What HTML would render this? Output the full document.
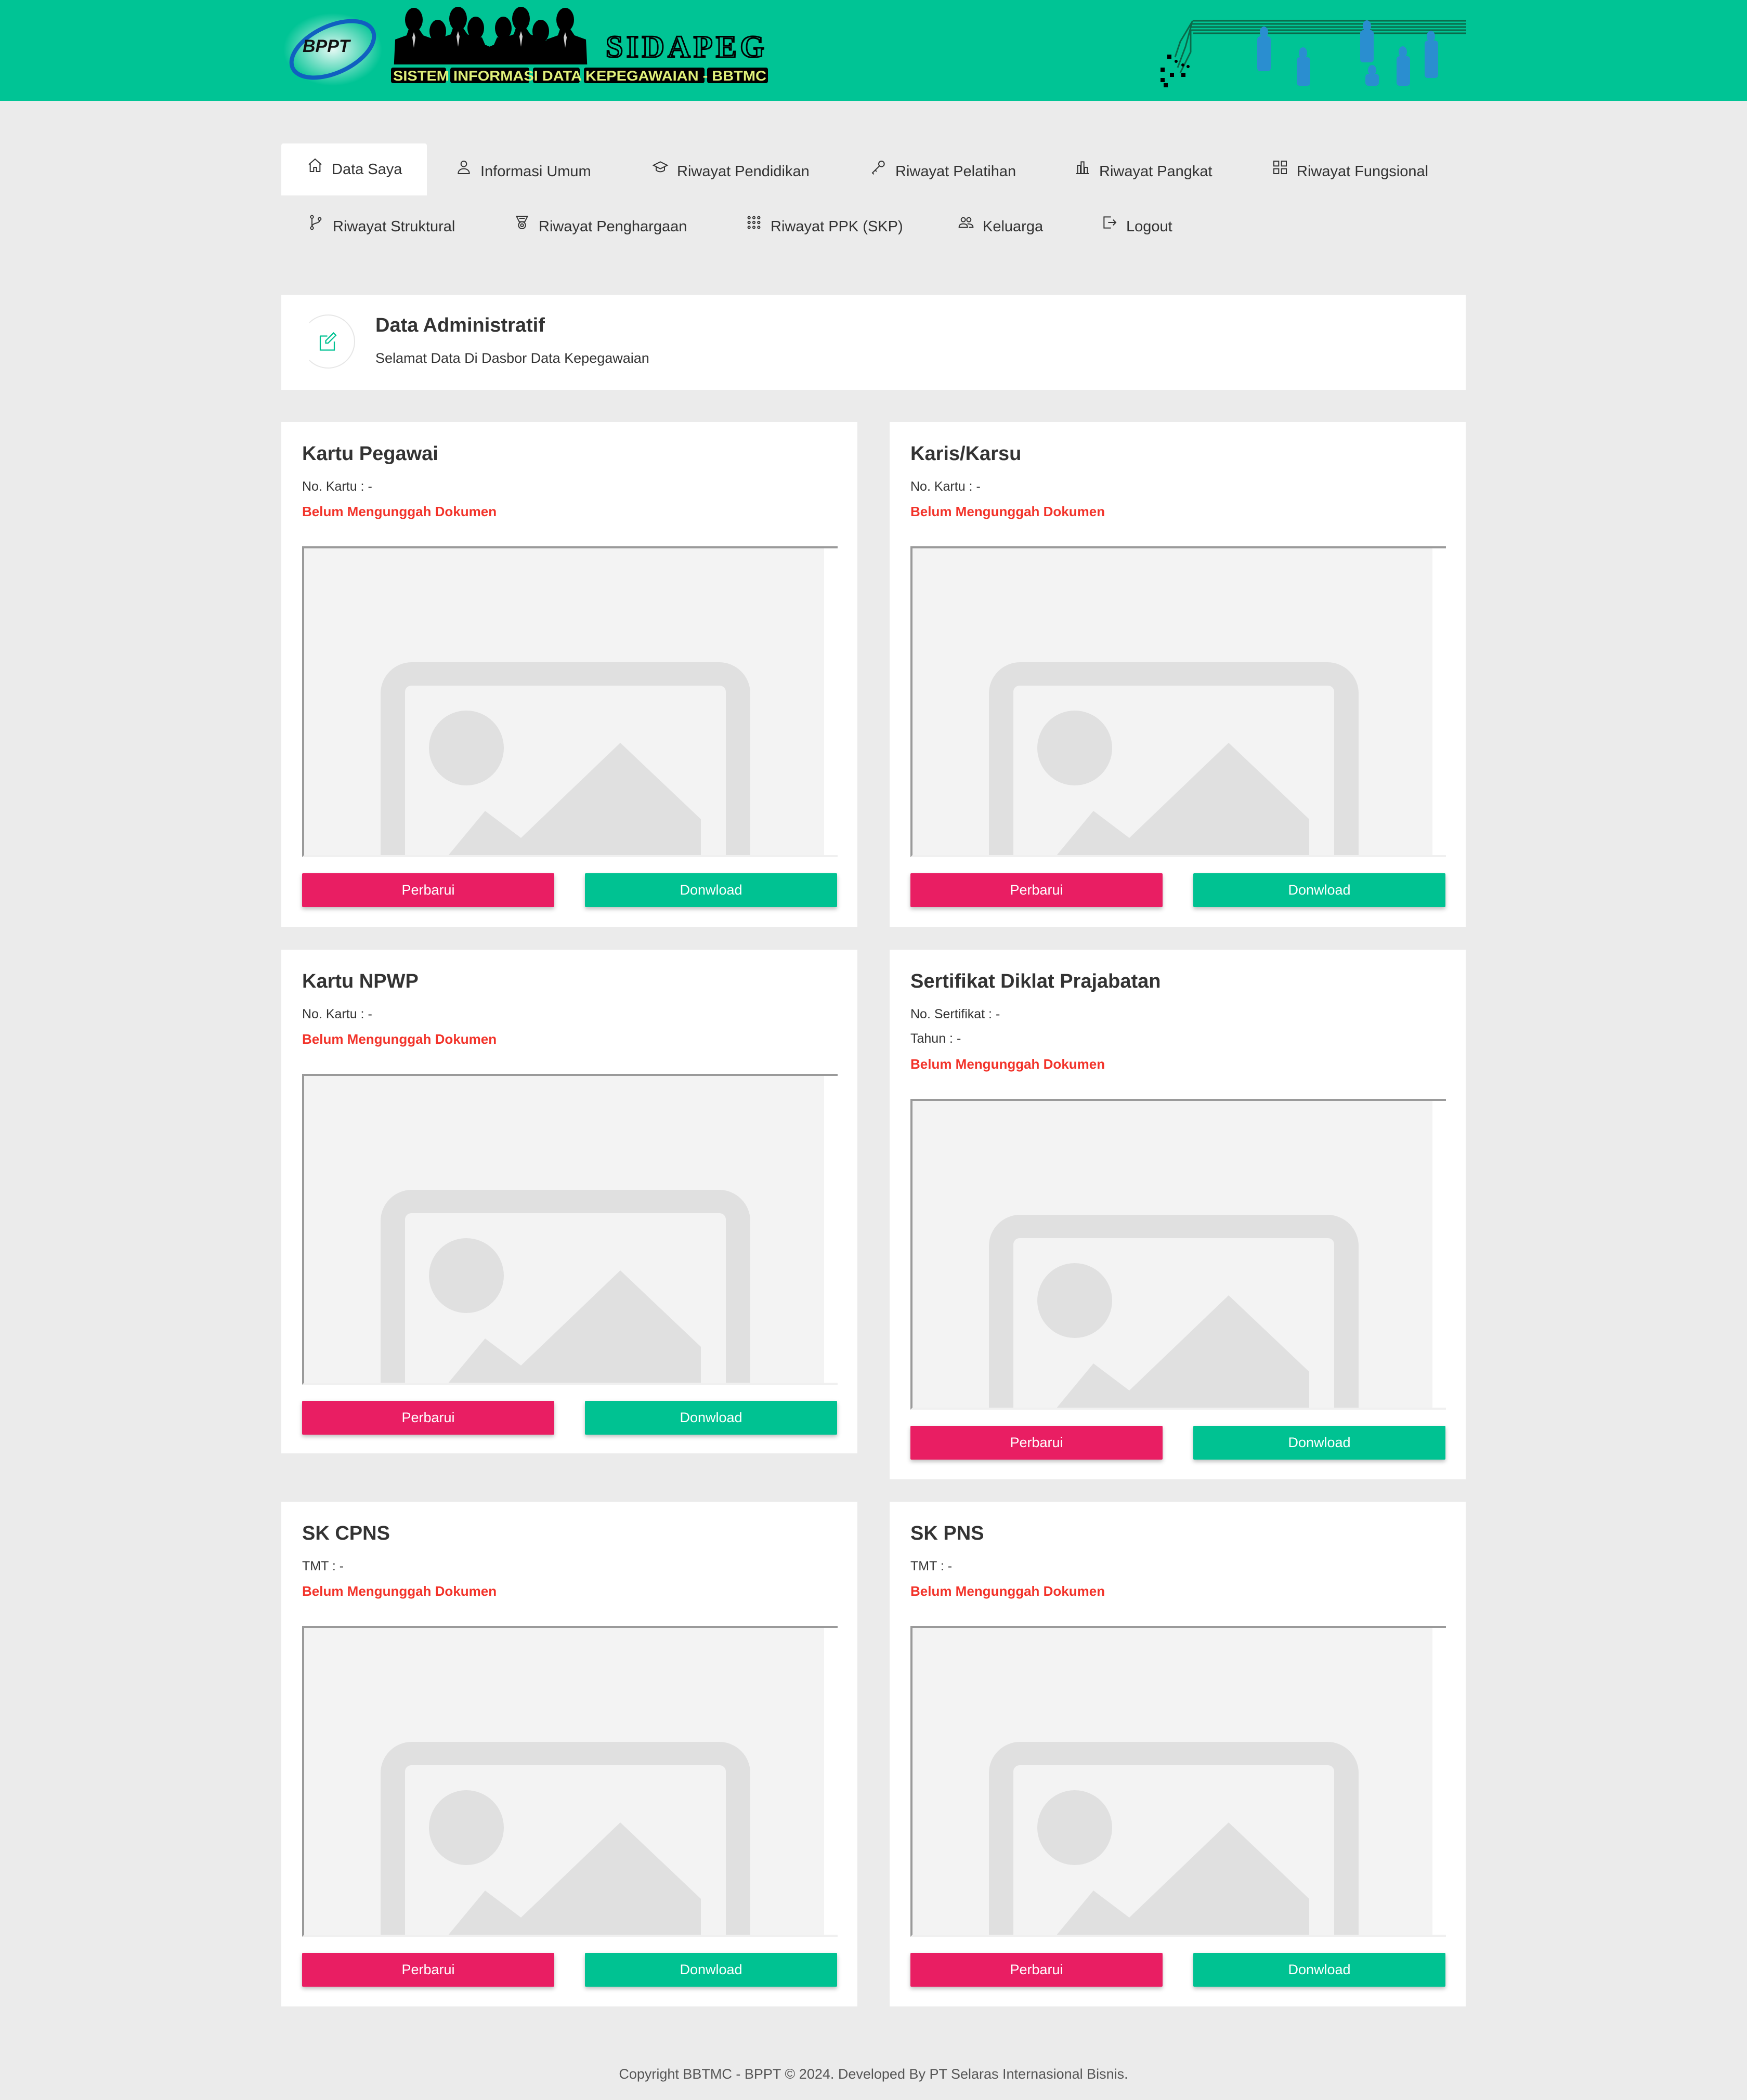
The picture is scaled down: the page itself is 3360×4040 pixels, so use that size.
<!DOCTYPE html>
<html><head><meta charset="utf-8">
<style>
*{box-sizing:border-box;margin:0;padding:0}
body{width:3360px;height:4040px;background:#ebebeb;font-family:"Liberation Sans",Arial,sans-serif;color:#333;position:relative;overflow:hidden}
.hdr{position:absolute;left:0;top:0;width:3360px;height:194px;background:#00c495}
.nav{position:absolute;font-size:29px;color:#333;display:flex;align-items:flex-start}
.nav svg{margin-right:16px;margin-top:-8px}
.tab{position:absolute;left:541px;top:276px;width:280px;height:100px;background:#fff;border-radius:4px 4px 0 0}
.admin{position:absolute;left:541px;top:567px;width:2278px;height:183px;background:#fff}
.card{position:absolute;background:#fff}
.card h3{position:absolute;left:40px;top:40px;font-size:38px;font-weight:bold;color:#333}
.card .l{position:absolute;left:40px;font-size:25px;color:#333}
.card .r{position:absolute;left:40px;font-size:26px;color:#f2332a;font-weight:bold}
.img{position:absolute;left:40px;width:1030px;height:598px;background:#f3f3f3;border-top:4px solid #9a9a9a;border-left:4px solid #9a9a9a;border-bottom:4px solid #f0f0f0;overflow:hidden}
.img .sb{position:absolute;right:0;top:0;width:26px;height:100%;background:#fff}
.btn{position:absolute;width:485px;height:65px;color:#fff;font-size:27px;text-align:center;line-height:65px;border-radius:2px;box-shadow:0 4px 8px rgba(0,0,0,.25)}
.p{background:#e91e63;left:40px}.d{background:#00c292;left:584px}
.foot{position:absolute;top:3975px;left:0;width:3360px;text-align:center;font-size:27px;color:#555}
</style></head><body>
<div class="hdr">
<svg width="3360" height="194" style="position:absolute;left:0;top:0">
 <defs><radialGradient id="g1"><stop offset="0" stop-color="#fff" stop-opacity=".9"/><stop offset="1" stop-color="#fff" stop-opacity="0"/></radialGradient>
 <clipPath id="cp"><rect x="740" y="0" width="400" height="124"/></clipPath>
 <g id="m"><ellipse cx="0" cy="0" rx="17" ry="23"/><path d="M-10 18h20l8 12 22 8 4 84h-84l4-84 22-8z"/></g>
 <g id="w"><ellipse cx="0" cy="0" rx="16" ry="22"/><path d="M-12 18h24l6 14 18 8 2 82h-76l2-82 18-8z"/></g></defs>
 <ellipse cx="640" cy="95" rx="95" ry="70" fill="url(#g1)"/>
 <ellipse cx="640" cy="95" rx="85" ry="45" fill="none" stroke="#1060c0" stroke-width="8" transform="rotate(-25 640 95)"/>
 <text x="582" y="100" font-size="34" font-weight="bold" font-style="italic" fill="#111" font-family="Liberation Sans">BPPT</text>
 <g fill="#000" clip-path="url(#cp)">
  <use href="#w" x="842" y="60"/><use href="#w" x="915" y="54"/><use href="#m" x="796" y="38"/><use href="#m" x="881" y="36"/>
  <use href="#w" x="968" y="54"/><use href="#w" x="1040" y="60"/><use href="#m" x="1002" y="36"/><use href="#m" x="1087" y="38"/>
 </g>
 <g fill="#fff" opacity=".8"><path d="M796 62l-3 10 3 20 3-20z"/><path d="M881 60l-3 10 3 20 3-20z"/><path d="M1002 60l-3 10 3 20 3-20z"/><path d="M1087 62l-3 10 3 20 3-20z"/></g>
 <g fill="#000"><rect x="752" y="130" width="106" height="30" rx="4"/><rect x="866" y="130" width="152" height="30" rx="4"/><rect x="1025" y="130" width="90" height="30" rx="4"/><rect x="1123" y="130" width="232" height="30" rx="4"/><rect x="1360" y="130" width="117" height="30" rx="4"/></g>
 <text x="1165" y="110" font-size="60" font-family="Liberation Serif" font-weight="bold" fill="#00c495" stroke="#000" stroke-width="3" textLength="305">SIDAPEG</text>
 <text x="756" y="155" font-size="27" font-family="Liberation Sans" font-weight="bold" fill="#e0f07a" textLength="718" lengthAdjust="spacingAndGlyphs">SISTEM INFORMASI DATA KEPEGAWAIAN - BBTMC</text>
 <g stroke="#0a6a4a" stroke-width="3" fill="none">
  <path d="M2294 40H2820M2292 46H2820M2290 52H2820M2290 58H2820M2295 64H2820"/>
  <path d="M2294 40L2270 80L2260 110M2292 46L2280 90L2265 130M2290 58L2290 100L2270 140"/>
 </g>
 <g fill="#000"><rect x="2245" y="105" width="8" height="8"/><rect x="2232" y="130" width="8" height="8"/><rect x="2250" y="140" width="8" height="8"/><rect x="2232" y="150" width="8" height="8"/><rect x="2272" y="140" width="8" height="8"/><rect x="2238" y="160" width="8" height="8"/><circle cx="2262" cy="118" r="3"/><circle cx="2275" cy="125" r="3"/><circle cx="2285" cy="128" r="3"/></g>
 <g fill="#2a8ed0">
  <ellipse cx="2431" cy="62" rx="8" ry="11"/><rect x="2418" y="70" width="26" height="67" rx="6"/>
  <ellipse cx="2506" cy="102" rx="8" ry="11"/><rect x="2494" y="110" width="26" height="55" rx="6"/>
  <ellipse cx="2629" cy="50" rx="8" ry="11"/><rect x="2616" y="58" width="26" height="62" rx="6"/>
  <ellipse cx="2639" cy="135" rx="8" ry="10"/><rect x="2626" y="142" width="26" height="23" rx="6"/>
  <ellipse cx="2698" cy="100" rx="8" ry="11"/><rect x="2686" y="108" width="26" height="57" rx="6"/>
  <ellipse cx="2752" cy="70" rx="8" ry="11"/><rect x="2740" y="78" width="26" height="72" rx="6"/>
 </g>
</svg>
</div>

<div class="tab"></div>
<div class="nav" style="left:590px;top:310px"><svg width="32" height="32" viewBox="0 0 24 24" fill="none" stroke="#333" stroke-width="1.5"><path d="M3 11L12 3l9 8M5 10v11h5v-6h4v6h5V10"/></svg>Data Saya</div>
<div class="nav" style="left:876px;top:314px"><svg width="32" height="32" viewBox="0 0 24 24" fill="none" stroke="#333" stroke-width="1.5"><circle cx="12" cy="7" r="4"/><path d="M4 21c0-5 4-7 8-7s8 2 8 7z"/></svg>Informasi Umum</div>
<div class="nav" style="left:1254px;top:314px"><svg width="32" height="32" viewBox="0 0 24 24" fill="none" stroke="#333" stroke-width="1.5"><path d="M2 9l10-5 10 5-10 5zM6 11v5c3 3 9 3 12 0v-5"/></svg>Riwayat Pendidikan</div>
<div class="nav" style="left:1674px;top:314px"><svg width="32" height="32" viewBox="0 0 24 24" fill="none" stroke="#333" stroke-width="1.5"><circle cx="16" cy="7" r="4"/><path d="M13 10L3 20l2 2M7 16l2 2"/></svg>Riwayat Pelatihan</div>
<div class="nav" style="left:2066px;top:314px"><svg width="32" height="32" viewBox="0 0 24 24" fill="none" stroke="#333" stroke-width="1.5"><path d="M3 21h18M5 21V9h4v12M10 21V4h4v17M15 21V12h4v9"/></svg>Riwayat Pangkat</div>
<div class="nav" style="left:2446px;top:314px"><svg width="32" height="32" viewBox="0 0 24 24" fill="none" stroke="#333" stroke-width="1.5"><rect x="3" y="3" width="7" height="7"/><rect x="14" y="3" width="7" height="7"/><rect x="3" y="14" width="7" height="7"/><rect x="14" y="14" width="7" height="7"/></svg>Riwayat Fungsional</div>
<div class="nav" style="left:592px;top:420px"><svg width="32" height="32" viewBox="0 0 24 24" fill="none" stroke="#333" stroke-width="1.5"><circle cx="6" cy="4" r="2"/><circle cx="6" cy="20" r="2"/><circle cx="17" cy="7" r="2"/><path d="M6 6v12M17 9c0 5-11 3-11 9"/></svg>Riwayat Struktural</div>
<div class="nav" style="left:988px;top:420px"><svg width="32" height="32" viewBox="0 0 24 24" fill="none" stroke="#333" stroke-width="1.5"><path d="M4 3h16l-4 8H8zM8 6h8"/><circle cx="12" cy="16" r="5"/><circle cx="12" cy="16" r="2"/></svg>Riwayat Penghargaan</div>
<div class="nav" style="left:1434px;top:420px"><svg width="32" height="32" viewBox="0 0 24 24" fill="none" stroke="#333" stroke-width="1.5"><circle cx="5" cy="5" r="1.6"/><circle cx="12" cy="5" r="1.6"/><circle cx="19" cy="5" r="1.6"/><circle cx="5" cy="12" r="1.6"/><circle cx="12" cy="12" r="1.6"/><circle cx="19" cy="12" r="1.6"/><circle cx="5" cy="19" r="1.6"/><circle cx="12" cy="19" r="1.6"/><circle cx="19" cy="19" r="1.6"/></svg>Riwayat PPK (SKP)</div>
<div class="nav" style="left:1842px;top:420px"><svg width="32" height="32" viewBox="0 0 24 24" fill="none" stroke="#333" stroke-width="1.5"><circle cx="8" cy="8" r="3"/><circle cx="16" cy="8" r="3"/><path d="M2 19c0-4 3-5 6-5s6 1 6 5zM14 14c4 0 8 1 8 5h-6"/></svg>Keluarga</div>
<div class="nav" style="left:2118px;top:420px"><svg width="32" height="32" viewBox="0 0 24 24" fill="none" stroke="#333" stroke-width="1.5"><path d="M14 4H4v16h10M10 12h11M17 8l4 4-4 4"/></svg>Logout</div>

<div class="admin">
 <div style="position:absolute;left:38px;top:38px;width:104px;height:104px;border-radius:50%;border:2px solid #e6e6e6;border-left-color:#fff"></div>
 <svg style="position:absolute;left:72px;top:70px" width="36" height="40" viewBox="0 0 24 26" fill="none" stroke="#00c292" stroke-width="1.5"><path d="M2 6h9M2 6v18h18V13"/><path d="M19 2l3 3-10 10H9v-3z"/></svg>
 <div style="position:absolute;left:181px;top:38px;font-size:38px;font-weight:bold;color:#333">Data Administratif</div>
 <div style="position:absolute;left:181px;top:107px;font-size:27px;color:#333">Selamat Data Di Dasbor Data Kepegawaian</div>
</div>

<div class="card" style="left:541px;top:812px;width:1108px;height:971px">
 <h3>Kartu Pegawai</h3><div class="l" style="top:110px">No. Kartu : -</div><div class="r" style="top:157px">Belum Mengunggah Dokumen</div>
 <div class="img" style="top:239px"><div class="sb"></div><svg width="1030" height="598" style="position:absolute;left:0;top:0"><rect x="147" y="219" width="711" height="500" rx="60" fill="#e0e0e0"/><rect x="194" y="264" width="617" height="450" rx="12" fill="#f3f3f3"/><circle cx="312" cy="384" r="72" fill="#e0e0e0"/><path d="M271 598L348 505L417 557L608 374L763 521V598Z" fill="#e0e0e0"/></svg></div>
 <div class="btn p" style="top:868px">Perbarui</div><div class="btn d" style="top:868px">Donwload</div>
</div>
<div class="card" style="left:1711px;top:812px;width:1108px;height:971px">
 <h3>Karis/Karsu</h3><div class="l" style="top:110px">No. Kartu : -</div><div class="r" style="top:157px">Belum Mengunggah Dokumen</div>
 <div class="img" style="top:239px"><div class="sb"></div><svg width="1030" height="598" style="position:absolute;left:0;top:0"><rect x="147" y="219" width="711" height="500" rx="60" fill="#e0e0e0"/><rect x="194" y="264" width="617" height="450" rx="12" fill="#f3f3f3"/><circle cx="312" cy="384" r="72" fill="#e0e0e0"/><path d="M271 598L348 505L417 557L608 374L763 521V598Z" fill="#e0e0e0"/></svg></div>
 <div class="btn p" style="top:868px">Perbarui</div><div class="btn d" style="top:868px">Donwload</div>
</div>
<div class="card" style="left:541px;top:1827px;width:1108px;height:969px">
 <h3>Kartu NPWP</h3><div class="l" style="top:110px">No. Kartu : -</div><div class="r" style="top:157px">Belum Mengunggah Dokumen</div>
 <div class="img" style="top:239px"><div class="sb"></div><svg width="1030" height="598" style="position:absolute;left:0;top:0"><rect x="147" y="219" width="711" height="500" rx="60" fill="#e0e0e0"/><rect x="194" y="264" width="617" height="450" rx="12" fill="#f3f3f3"/><circle cx="312" cy="384" r="72" fill="#e0e0e0"/><path d="M271 598L348 505L417 557L608 374L763 521V598Z" fill="#e0e0e0"/></svg></div>
 <div class="btn p" style="top:868px">Perbarui</div><div class="btn d" style="top:868px">Donwload</div>
</div>
<div class="card" style="left:1711px;top:1827px;width:1108px;height:1019px">
 <h3>Sertifikat Diklat Prajabatan</h3><div class="l" style="top:110px">No. Sertifikat : -</div><div class="l" style="top:157px">Tahun : -</div><div class="r" style="top:205px">Belum Mengunggah Dokumen</div>
 <div class="img" style="top:287px"><div class="sb"></div><svg width="1030" height="598" style="position:absolute;left:0;top:0"><rect x="147" y="219" width="711" height="500" rx="60" fill="#e0e0e0"/><rect x="194" y="264" width="617" height="450" rx="12" fill="#f3f3f3"/><circle cx="312" cy="384" r="72" fill="#e0e0e0"/><path d="M271 598L348 505L417 557L608 374L763 521V598Z" fill="#e0e0e0"/></svg></div>
 <div class="btn p" style="top:916px">Perbarui</div><div class="btn d" style="top:916px">Donwload</div>
</div>
<div class="card" style="left:541px;top:2889px;width:1108px;height:971px">
 <h3>SK CPNS</h3><div class="l" style="top:110px">TMT : -</div><div class="r" style="top:157px">Belum Mengunggah Dokumen</div>
 <div class="img" style="top:239px"><div class="sb"></div><svg width="1030" height="598" style="position:absolute;left:0;top:0"><rect x="147" y="219" width="711" height="500" rx="60" fill="#e0e0e0"/><rect x="194" y="264" width="617" height="450" rx="12" fill="#f3f3f3"/><circle cx="312" cy="384" r="72" fill="#e0e0e0"/><path d="M271 598L348 505L417 557L608 374L763 521V598Z" fill="#e0e0e0"/></svg></div>
 <div class="btn p" style="top:868px">Perbarui</div><div class="btn d" style="top:868px">Donwload</div>
</div>
<div class="card" style="left:1711px;top:2889px;width:1108px;height:971px">
 <h3>SK PNS</h3><div class="l" style="top:110px">TMT : -</div><div class="r" style="top:157px">Belum Mengunggah Dokumen</div>
 <div class="img" style="top:239px"><div class="sb"></div><svg width="1030" height="598" style="position:absolute;left:0;top:0"><rect x="147" y="219" width="711" height="500" rx="60" fill="#e0e0e0"/><rect x="194" y="264" width="617" height="450" rx="12" fill="#f3f3f3"/><circle cx="312" cy="384" r="72" fill="#e0e0e0"/><path d="M271 598L348 505L417 557L608 374L763 521V598Z" fill="#e0e0e0"/></svg></div>
 <div class="btn p" style="top:868px">Perbarui</div><div class="btn d" style="top:868px">Donwload</div>
</div>

<div class="foot">Copyright BBTMC - BPPT © 2024. Developed By PT Selaras Internasional Bisnis.</div>
</body></html>
